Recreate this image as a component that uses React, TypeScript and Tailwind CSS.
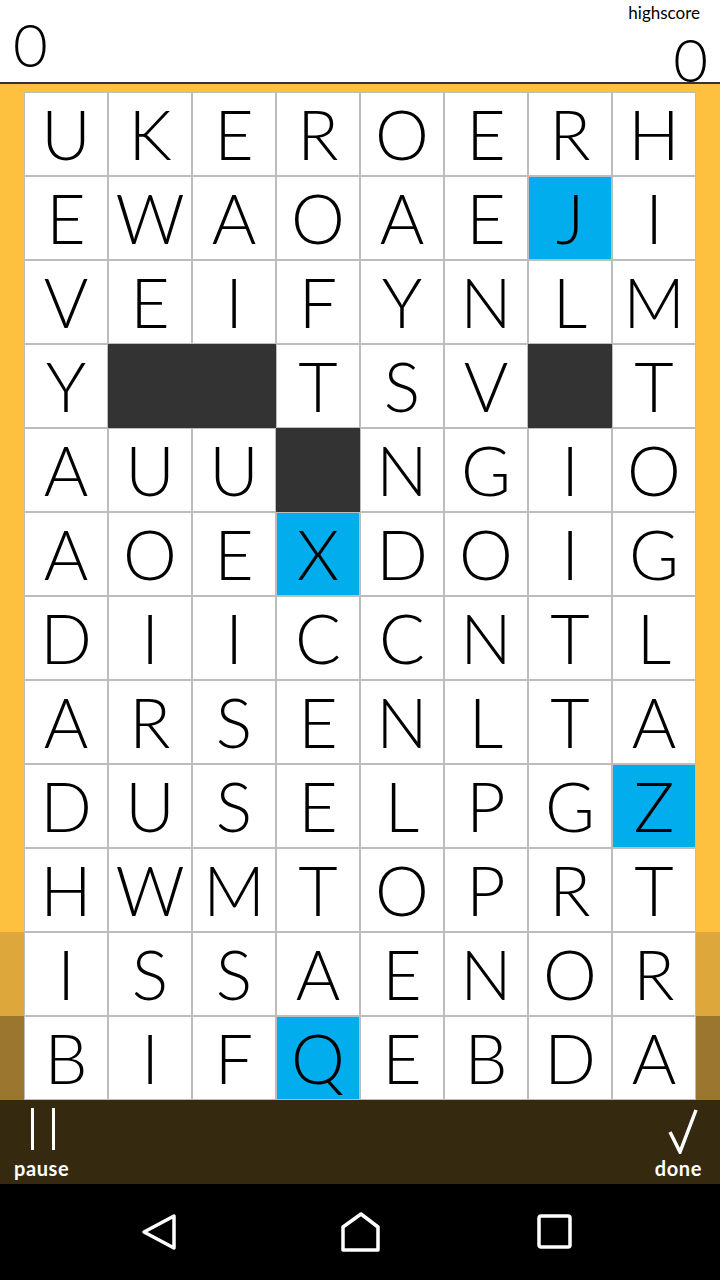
import React from "react";

const rows: string[] = [
  "UKEROERH",
  "EWAOAEJI",
  "VEIFYNLM",
  "Y##TSV#T",
  "AUU#NGIO",
  "AOEXDOIG",
  "DIICCNTL",
  "ARSENLTA",
  "DUSELPGZ",
  "HWMTOPRT",
  "ISSAENOR",
  "BIFQEBDA",
];

const blue = new Set(["1-6", "5-3", "8-7", "11-3"]);

function rowBg(i: number) {
  if (i === 10) return "bg-[#dea73b]";
  if (i === 11) return "bg-[#9b762f]";
  return "bg-[#fdc13f]";
}

export default function App() {
  return (
    <div
      className="w-[720px] h-[1280px] flex flex-col overflow-hidden bg-black"
      style={{ fontFamily: "Lato, 'Noto Sans', sans-serif" }}
    >
      {/* header */}
      <div className="h-[84px] bg-white border-b-[2px] border-[#333333] flex justify-between relative">
        <div className="pl-[13px] pt-[14px] text-[60px] font-light leading-none text-black">0</div>
        <div className="flex flex-col items-end pr-[12px]">
          <div className="text-[17px] leading-none pt-[4px] pr-[8px] text-black">highscore</div>
          <div className="text-[60px] font-light leading-none mt-[8px] text-black">0</div>
        </div>
      </div>
      {/* grid area */}
      <div className="flex flex-col">
        <div className="h-[8px] bg-[#fdc13f]" />
        {rows.map((r, i) => (
          <div key={i} className={`flex px-[24px] ${rowBg(i)}`}>
            {r.split("").map((ch, j) => {
              const isDark = ch === "#";
              const isBlue = blue.has(`${i}-${j}`);
              const cls = isDark
                ? "bg-[#333333] border-[#333333]"
                : isBlue
                ? "bg-[#02aded] border-[#bdbdbd]"
                : "bg-white border-[#bdbdbd]";
              return (
                <div
                  key={j}
                  className={`w-[84px] h-[84px] border flex items-center justify-center text-[68px] font-light leading-none text-black ${cls}`}
                >
                  {isDark ? "" : ch}
                </div>
              );
            })}
          </div>
        ))}
      </div>
      {/* bottom bar */}
      <div className="h-[84px] bg-[#352a10] flex justify-between items-start px-[14px]">
        <div className="flex flex-col items-center pt-[8px]">
          <div className="flex gap-[18px] h-[42px] pl-[2px]">
            <div className="w-[3px] h-[42px] bg-white" />
            <div className="w-[3px] h-[42px] bg-white" />
          </div>
          <div className="text-white text-[20px] font-bold leading-none mt-[8px] tracking-[0.6px]">pause</div>
        </div>
        <div className="flex flex-col items-center pt-[8px] pr-[4px]">
          <svg width="30" height="46" viewBox="0 0 30 46" className="ml-[8px]">
            <path d="M2 24 L12 44 L28 2" fill="none" stroke="white" strokeWidth="3.5" strokeLinejoin="miter" />
          </svg>
          <div className="text-white text-[20px] font-bold leading-none mt-[4px] -ml-[2px] tracking-[0.6px]">done</div>
        </div>
      </div>
      {/* nav bar */}
      <div className="flex-1 bg-black flex items-center">
        <div className="ml-[141px] w-[36px] flex justify-center">
          <svg width="36" height="40" viewBox="0 0 36 40">
            <path d="M33 4 L3 20 L33 36 Z" fill="none" stroke="white" strokeWidth="3.5" strokeLinejoin="round" />
          </svg>
        </div>
        <div className="ml-[163px] w-[42px] flex justify-center">
          <svg width="42" height="42" viewBox="0 0 42 42">
            <path d="M3 16 L21 3 L38 16 L38 39 L3 39 Z" fill="none" stroke="white" strokeWidth="3.5" strokeLinejoin="round" />
          </svg>
        </div>
        <div className="ml-[155px] w-[36px] flex justify-center">
          <svg width="36" height="36" viewBox="0 0 36 36">
            <rect x="2" y="2" width="31" height="31" rx="2" fill="none" stroke="white" strokeWidth="3.5" />
          </svg>
        </div>
      </div>
    </div>
  );
}
